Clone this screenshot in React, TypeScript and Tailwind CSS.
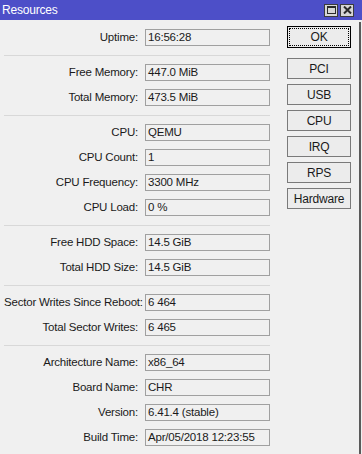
import React from 'react';

type Row = { label: string; value: string };

const groups: Row[][] = [
  [{ label: 'Uptime:', value: '16:56:28' }],
  [
    { label: 'Free Memory:', value: '447.0 MiB' },
    { label: 'Total Memory:', value: '473.5 MiB' },
  ],
  [
    { label: 'CPU:', value: 'QEMU' },
    { label: 'CPU Count:', value: '1' },
    { label: 'CPU Frequency:', value: '3300 MHz' },
    { label: 'CPU Load:', value: '0 %' },
  ],
  [
    { label: 'Free HDD Space:', value: '14.5 GiB' },
    { label: 'Total HDD Size:', value: '14.5 GiB' },
  ],
  [
    { label: 'Sector Writes Since Reboot:', value: '6 464' },
    { label: 'Total Sector Writes:', value: '6 465' },
  ],
  [
    { label: 'Architecture Name:', value: 'x86_64' },
    { label: 'Board Name:', value: 'CHR' },
    { label: 'Version:', value: '6.41.4 (stable)' },
    { label: 'Build Time:', value: 'Apr/05/2018 12:23:55' },
  ],
];

const buttons = ['PCI', 'USB', 'CPU', 'IRQ', 'RPS', 'Hardware'];

function Field({ label, value }: Row) {
  return (
    <div className="flex items-center h-[25px]">
      <div className="w-[135px] text-right pr-[1px] whitespace-nowrap">{label}</div>
      <div className="ml-[6px] w-[125px] h-[17px] border border-[#a0a0a0] bg-[#f0f0f0] flex items-center pl-[2px] whitespace-nowrap">
        {value}
      </div>
    </div>
  );
}

export default function App() {
  return (
    <div className="w-[362px] h-[454px] bg-[#f0f0f0] flex flex-col overflow-hidden text-[11.5px] tracking-[-0.2px] text-[#1a1a1a] font-['Liberation_Sans',Arial,sans-serif]">
      {/* title bar */}
      <div className="h-[20px] bg-[#4d4fc8] flex items-center pl-[2px] pr-[8px] text-white text-[12px]">
        <span className="flex-1">Resources</span>
        <div className="flex gap-[2px]">
          <div className="w-[14px] h-[13px] bg-[#d6d6d6] border border-[#3c3c3c] flex items-center justify-center">
            <div className="w-[9px] h-[8px] border border-[#2a2a2a] border-t-2"></div>
          </div>
          <div className="w-[14px] h-[13px] bg-[#d6d6d6] border border-[#3c3c3c] flex items-center justify-center">
            <svg width="9" height="8" viewBox="0 0 9 8">
              <path d="M1 0.5 L8 7.5 M8 0.5 L1 7.5" stroke="#2a2a2a" strokeWidth="2" />
            </svg>
          </div>
        </div>
      </div>

      <div className="flex flex-1">
        <div className="flex-1 flex pt-[5px]">
          <div className="pl-[4px] w-[276px]">
            {groups.map((g, i) => (
              <div key={i}>
                {i > 0 && (
                  <div className="h-[10px] flex items-center">
                    <div className="w-[266px] h-px bg-[#d8d8d8]"></div>
                  </div>
                )}
                {g.map((r) => (
                  <Field key={r.label} {...r} />
                ))}
              </div>
            ))}
          </div>

          <div className="ml-[11px] w-[64px] pt-[1px] flex flex-col">
            <div className="h-[22px] border border-black bg-[#ececec] p-[1px]">
              <div className="h-full border border-dotted border-black flex items-center justify-center text-[12px]">
                OK
              </div>
            </div>
            <div className="mt-[10px] flex flex-col gap-[5px]">
              {buttons.map((b) => (
                <div
                  key={b}
                  className="h-[21px] border border-[#7a7a7a] bg-[#ececec] flex items-center justify-center text-[12px]"
                >
                  {b}
                </div>
              ))}
            </div>
          </div>
        </div>
        <div className="w-[2px] bg-[#5a5a5a] mt-[2px]"></div>
        <div className="w-[1px]"></div>
      </div>
    </div>
  );
}
